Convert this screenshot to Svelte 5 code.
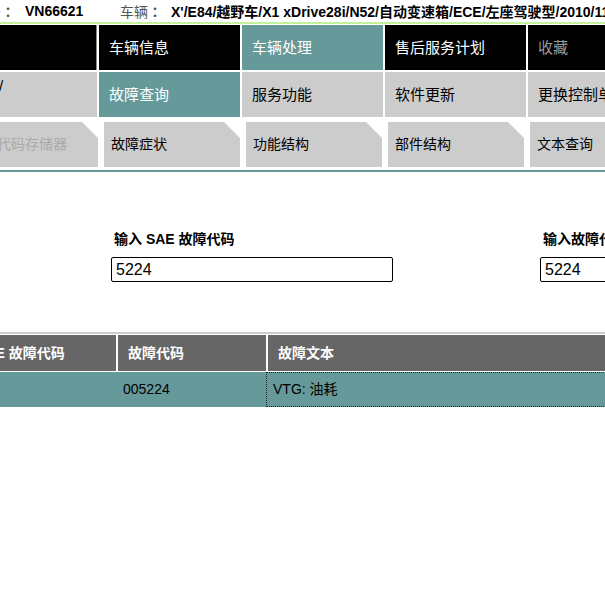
<script>
  const top = [
    { label: '', cls: 'black first' },
    { label: '车辆信息', cls: 'black' },
    { label: '车辆处理', cls: 'teal' },
    { label: '售后服务计划', cls: 'black' },
    { label: '收藏', cls: 'black muted' }
  ];
  const second = [
    { label: '/', cls: 'grey slash' },
    { label: '故障查询', cls: 'teal' },
    { label: '服务功能', cls: 'grey' },
    { label: '软件更新', cls: 'grey' },
    { label: '更换控制单元', cls: 'grey' }
  ];
  const tabs = [
    { label: '故障代码存储器', cls: 'disabled' },
    { label: '故障症状', cls: '' },
    { label: '功能结构', cls: '' },
    { label: '部件结构', cls: '' },
    { label: '文本查询', cls: 'last' }
  ];
</script>

<div class="page">
  <header class="info">
    <span class="key vin-key">底盘号<span class="colon">：</span></span>
    <b class="vin">VN66621</b>
    <span class="key car-key">车辆<span class="colon">：</span></span>
    <b class="car">X'/E84/越野车/X1 xDrive28i/N52/自动变速箱/ECE/左座驾驶型/2010/11</b>
  </header>

  <nav class="menu">
    {#each top as item}
      <div class="cell {item.cls}">{item.label}</div>
    {/each}
  </nav>
  <nav class="menu second">
    {#each second as item}
      <div class="cell {item.cls}">{item.label}</div>
    {/each}
  </nav>
  <nav class="tabs">
    {#each tabs as tab}
      <div class="tab {tab.cls}">{tab.label}</div>
    {/each}
  </nav>
  <div class="rule"></div>

  <section class="search">
    <div class="field sae">
      <label for="sae">输入 SAE 故障代码</label>
      <input id="sae" value="5224" />
    </div>
    <div class="field code">
      <label for="code">输入故障代码</label>
      <input id="code" value="5224" />
    </div>
  </section>

  <section class="table">
    <div class="thead">
      <div class="th">SAE 故障代码</div>
      <div class="th">故障代码</div>
      <div class="th">故障文本</div>
    </div>
    <div class="tr">
      <div class="td"></div>
      <div class="td code-cell">005224</div>
      <div class="td focus">VTG: 油耗</div>
    </div>
  </section>
</div>

<style>
  :global(body) {
    margin: 0;
    background: #fff;
    overflow: hidden;
  }
  .page {
    width: 605px;
    height: 601px;
    overflow: hidden;
    font-family: "Liberation Sans", "Noto Sans CJK SC", sans-serif;
    color: #000;
    position: relative;
  }
  .info {
    height: 22px;
    border-bottom: 2px solid #c4f29b;
    margin-bottom: 1px;
    display: flex;
    align-items: center;
    font-size: 14px;
    white-space: nowrap;
    margin-left: -41px;
    width: 800px;
  }
  .key {
    color: #555;
  }
  .colon {
    font-family: "Noto Sans CJK TC", sans-serif;
    font-weight: bold;
  }
  .vin-key {
    width: 66px;
  }
  .vin {
    width: 95px;
  }
  .car-key {
    width: 51px;
  }
  .menu {
    display: grid;
    grid-template-columns: repeat(5, 141px);
    column-gap: 2px;
    margin-left: -44px;
    width: 800px;
    height: 45px;
  }
  .second {
    margin-top: 2px;
  }
  .cell {
    font-size: 15px;
    line-height: 45px;
    padding-left: 10px;
    white-space: nowrap;
    overflow: hidden;
    box-sizing: border-box;
  }
  .black {
    background: #000;
    color: #fff;
  }
  .first {
    border-right: 1px solid #888;
  }
  .muted {
    color: #999;
  }
  .teal {
    background: #669999;
    color: #fff;
  }
  .grey {
    background: #ccc;
    color: #000;
  }
  .slash {
    padding-left: 43px;
    line-height: 28px;
  }
  .tabs {
    display: grid;
    grid-template-columns: repeat(5, 136px);
    column-gap: 6px;
    margin: 5px 0 0 -38px;
    width: 800px;
    height: 45px;
  }
  .tab {
    background: #ccc;
    font-size: 14px;
    line-height: 45px;
    padding-left: 7px;
    white-space: nowrap;
    overflow: hidden;
    clip-path: polygon(0 0, calc(100% - 16px) 0, 100% 16px, 100% 100%, 0 100%);
  }
  .disabled {
    color: #aaa;
  }
  .rule {
    height: 2px;
    margin-top: 3px;
    background: #669999;
  }
  .search {
    height: 160px;
    position: relative;
  }
  .field {
    position: absolute;
    top: 59px;
  }
  .sae {
    left: 111px;
  }
  .code {
    left: 540px;
  }
  .field label {
    display: block;
    font-size: 14px;
    font-weight: bold;
    line-height: 16px;
    padding-left: 3px;
    white-space: nowrap;
  }
  .field input {
    display: block;
    box-sizing: border-box;
    width: 282px;
    height: 25px;
    margin-top: 10px;
    border: 1px solid #000;
    border-radius: 2px;
    padding: 0 4px;
    font: 16px "Liberation Sans", sans-serif;
    color: #000;
    background: #fff;
    outline: none;
  }
  .table {
    border-top: 2px solid #ccc;
    padding-top: 1px;
  }
  .thead {
    display: grid;
    grid-template-columns: 152px 150px 400px;
    margin-left: -34px;
  }
  .tr {
    display: grid;
    grid-template-columns: 152px 148px 400px;
    margin: 1px 0 0 -34px;
    background: #669999;
    height: 35px;
    width: 700px;
  }
  .th {
    background: #666;
    color: #fff;
    height: 36px;
    line-height: 36px;
    font-size: 14px;
    font-weight: bold;
    white-space: nowrap;
    box-sizing: border-box;
    padding-left: 10px;
    border-right: 2px solid #fff;
  }
  .td {
    font-size: 14px;
    line-height: 35px;
    box-sizing: border-box;
    color: #000;
  }
  .code-cell {
    padding-left: 5px;
  }
  .focus {
    border: 1px dotted #222;
    padding-left: 6px;
    line-height: 33px;
  }
</style>
